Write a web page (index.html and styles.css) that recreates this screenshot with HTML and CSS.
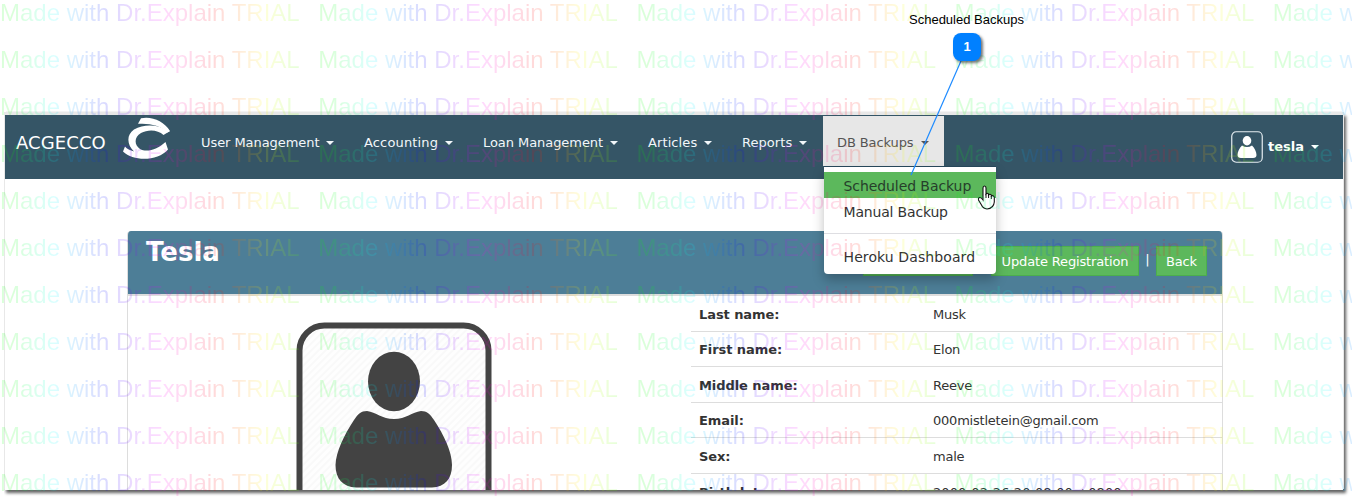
FILE: index.html
```html
<!DOCTYPE html>
<html lang="en">
<head>
<meta charset="utf-8">
<title>ACGECCO</title>
<link rel="stylesheet" href="styles.css">
</head>
<body>
<main class="window">
  <nav class="navbar">
    <span class="brand">ACGECCO</span>
    <svg class="logo" width="48" height="43" viewBox="0 0 48 43" fill="#fff">
      <path d="M19 1.200C30-1 42 4 48 14L45.500 15.500C38 8.500 28 6 16 6.800Z"/>
      <path d="M48 14L41.500 18C36 12.500 26 12 19 16C12 20 12 28 18 32C25 36 36 32 43.500 25L46 32.500C36 44 12 45 1 34.500L3 29.500C5 32 8 33 12 34.500C5 28 4 18 12 12.500C22 7 36 7 45.500 14Z"/>
    </svg>
    <div class="menu">
      <a class="item users"><span>User Management</span><i class="caret"></i></a>
      <a class="item accounting"><span>Accounting</span><i class="caret"></i></a>
      <a class="item loans"><span>Loan Management</span><i class="caret"></i></a>
      <a class="item articles"><span>Articles</span><i class="caret"></i></a>
      <a class="item reports"><span>Reports</span><i class="caret"></i></a>
      <div class="backups">
        <a class="item open"><span>DB Backups</span><i class="caret"></i></a>
        <div class="dropdown">
          <a class="entry active">Scheduled Backup</a>
          <a class="entry manual">Manual Backup</a>
          <div class="divider"></div>
          <a class="entry heroku">Heroku Dashboard</a>
        </div>
      </div>
    </div>
    <div class="user">
      <svg width="32" height="32" viewBox="0 0 32 32"><rect x=".75" y=".75" width="30.500" height="30.500" rx="4.500" fill="none" stroke="#e5edf1" stroke-width="1.200"/><ellipse cx="16" cy="9.700" rx="4.300" ry="4.700" fill="#fff"/><path fill="#fff" d="M11 14.500Q16 17.500 21 14.500C23.500 17 25.500 21 25.500 24Q25.500 27 22 27H10Q6.500 27 6.500 24C6.500 21 8.500 17 11 14.500Z"/></svg>
      <b>tesla</b><i class="caret"></i>
    </div>
  </nav>
  <section class="card">
    <header class="card-head">
      <h1>Tesla</h1>
      <div class="actions"><a class="btn blank"></a><a class="btn update">Update Registration</a><span class="sep">|</span><a class="btn back">Back</a></div>
    </header>
    <div class="card-body">
      <svg class="avatar" width="196" height="170" viewBox="0 0 196 170">
        <defs><pattern id="hatch" width="5" height="5" patternUnits="userSpaceOnUse" patternTransform="rotate(45)"><rect width="5" height="5" fill="#fefefe"/><rect width="2" height="5" fill="#f9f9f9"/></pattern></defs>
        <rect x="3.500" y="3.500" width="189" height="220" rx="25" fill="url(#hatch)" stroke="#444" stroke-width="6"/>
        <ellipse cx="98" cy="59.500" rx="26" ry="29.700" fill="#434343"/>
        <path fill="#434343" d="M71 89C80 90 86 97 98 97S116 90 125 89C131 89 134 92 138 98C148 113 156 130 156 143C156 157 149 165 136 165.500H60C47 165 39.500 157 39.500 143C40 130 48 113 58 98C62 92 65 89 71 89Z"/>
      </svg>
      <dl class="details">
        <dt>Last name:</dt><dd>Musk</dd>
        <dt class="high">First name:</dt><dd class="high">Elon</dd>
        <dt>Middle name:</dt><dd>Reeve</dd>
        <dt class="high">Email:</dt><dd class="high">000mistletein@gmail.com</dd>
        <dt>Sex:</dt><dd>male</dd>
        <dt>Birthdate:</dt><dd class="date">2000-02-26 20:08:00 +0800</dd>
      </dl>
    </div>
  </section>
</main>
<svg class="cursor" width="20" height="26" viewBox="0 0 20 26"><path d="M6 15V3Q6 1 7.500 1T9 3V9Q10 7.500 11.500 9V10Q13 8.500 14.300 10V11Q16 10 17.300 12V17Q17 20 15.500 21.500Q13 24 10 24Q6 23.500 4.500 20L1.500 15Q1 13 2.500 12.500Q4 12 6 15Z" fill="#fff" stroke="#111" stroke-width="1.100"/><path d="M9 9V13M11.600 10V13M14.300 11V14" stroke="#111" fill="none"/></svg>
<div class="watermark" id="watermark"></div>
<svg class="pointer" width="1352" height="200"><path d="M961 61L911 175" stroke="#1e8bff" stroke-width="1.200"/></svg>
<div class="label">Scheduled Backups</div>
<div class="badge">1</div>
<script src="watermark.js"></script>
</body>
</html>
```

FILE: styles.css
```css
* { box-sizing: border-box; }
html { overflow: hidden; }
body { margin: 0; width: 1352px; height: 499px; overflow: hidden; position: relative; background: #fff; padding: 115px 9px 0 5px; font: 13px/18px "DejaVu Sans", sans-serif; color: #333; }
.window { width: 1338px; height: 375px; background: #fff; box-shadow: 0 -2px 0 1px #e8e8e8, 0 -5px 0 -1px #f3f3f3, 2px 2px 3px 1px rgba(0,0,0,.62); clip-path: inset(-5px -9px -9px -1px); }
.navbar { display: flex; height: 64px; background: #355566; color: #f2f7fa; }
.brand { width: 117px; padding: 18px 0 0 11px; font-size: 18px; line-height: 20px; letter-spacing: .1px; color: #fff; }
.logo { margin-top: 2px; flex: none; }
.menu { display: flex; padding: 1px 0 0 16px; }
.item { display: flex; align-items: center; justify-content: space-between; height: 50px; padding: 3px 15px 0; white-space: nowrap; letter-spacing: -.06px; }
.users { width: 163px; }
.accounting { width: 119px; letter-spacing: .15px; }
.loans { width: 165px; }
.articles { width: 94px; letter-spacing: .1px; }
.reports { width: 96px; padding-right: 16px; letter-spacing: .05px; }
.caret { border: 4px solid transparent; border-top-color: currentColor; border-bottom: 0; }
.backups { position: relative; width: 121px; }
.open { background: #e7e7e7; color: #555; padding-left: 14px; letter-spacing: -.1px; }
.dropdown { position: absolute; z-index: 2; top: 51px; left: 1px; width: 172px; height: 107px; padding: 5px 0; background: #fff; color: #333; border-radius: 0 0 4px 4px; box-shadow: 0 -1px 0 #27475a, 0 6px 12px rgba(0,0,0,.25); }
.entry { display: block; height: 26px; line-height: 28px; padding-left: 19.500px; font-size: 14px; white-space: nowrap; }
.active { background: #5cb85c; color: #263f2b; letter-spacing: -.08px; }
.manual { letter-spacing: -.18px; }
.heroku { letter-spacing: .1px; }
.divider { height: 1px; margin: 9px 0; background: #dedee2; }
.user { display: flex; align-items: center; height: 64px; margin-left: auto; padding-right: 24px; color: #fff; }
.user b { margin: 0 7px 0 5px; }
.card { width: 1096px; height: 259px; margin: 52px 0 0 122px; border: 1px solid #ddd; border-width: 0 1px; border-radius: 4px 4px 0 0; overflow: hidden; }
.card-head { display: flex; justify-content: space-between; height: 63px; margin: 0 -1px; padding: 6px 16px 0 19px; background: #4d7e97; }
h1 { margin: 0; font-size: 26px; line-height: 30px; color: #fff; }
.actions { display: flex; padding-top: 9px; }
.btn { height: 30px; line-height: 29px; border: 1px solid #4cae4c; background: #5cb85c; color: #fff; text-align: center; white-space: nowrap; letter-spacing: -.15px; }
.blank { width: 110px; margin-right: 18px; }
.update { width: 148px; }
.back { width: 51px; }
.sep { width: 17px; line-height: 28px; text-align: center; color: #fff; }
.card-body { display: flex; height: 196px; overflow: hidden; border-top: 2px solid #ddd; }
.avatar { margin: 26px 199px 0 168px; flex: none; }
.details { display: grid; grid-template-columns: 242px 289px; grid-template-rows: 36px 35px 36px 35px 36px 36px; flex: none; margin: 0; }
dt, dd { margin: 0; padding: 10px 0 0 8px; border-bottom: 1px solid #ddd; white-space: nowrap; }
dt { font-weight: bold; letter-spacing: -.07px; }
dd { padding-left: 0; letter-spacing: -.22px; }
.date { letter-spacing: .1px; }
.high { padding-top: 9px; }
.cursor { position: absolute; left: 977px; top: 185px; }
.watermark { position: absolute; inset: 0; overflow: hidden; opacity: .14; font: 24px/47px "Liberation Sans", Arial, sans-serif; }
.watermark-row { display: flex; width: 1590px; height: 47px; }
.watermark-row:first-child { margin-top: -11px; }
.watermark-text { flex: none; width: 318.200px; white-space: pre; color: transparent; background: linear-gradient(90deg, #0f0 0, #0f0 4%, #0ff 17%, #00f 33%, #f0f 51%, #f00 68%, #ff0 83%, #0f0 100%); -webkit-background-clip: text; background-clip: text; }
.pointer { position: absolute; left: 0; top: 0; }
.label { position: absolute; left: 909px; top: 12px; font: 13px/16px "Liberation Sans", Arial, sans-serif; color: #000; white-space: nowrap; }
.badge { position: absolute; left: 953px; top: 33px; width: 28px; height: 28px; border-radius: 8px; background: #0080ff; color: #fff; text-align: center; font: bold 13px/28px "Liberation Sans", Arial, sans-serif; box-shadow: 2px 2px 3px rgba(0,0,0,.55); }
```

FILE: watermark.js
```
const layer = document.getElementById('watermark');
for (let row = 0; row < 11; row++) {
  const line = document.createElement('div');
  line.className = 'watermark-row';
  for (let col = 0; col < 5; col++) {
    const text = document.createElement('span');
    text.className = 'watermark-text';
    text.textContent = 'Made with Dr.Explain TRIAL';
    line.append(text);
  }
  layer.append(line);
}
```
